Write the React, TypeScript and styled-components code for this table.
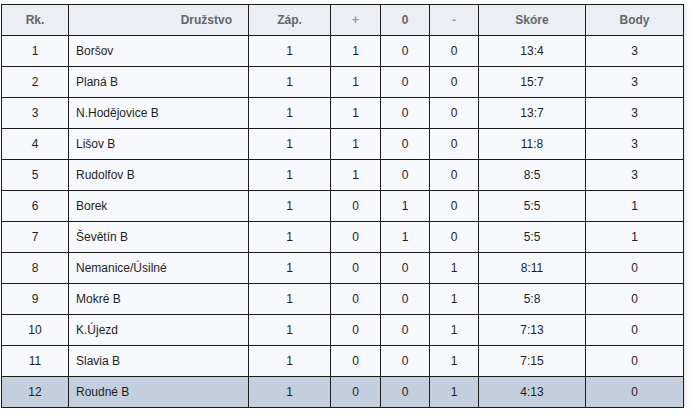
import styled, { createGlobalStyle } from "styled-components";

interface Team {
  rank: number;
  name: string;
  played: number;
  won: number;
  drawn: number;
  lost: number;
  score: string;
  points: number;
}

const teams: Team[] = [
  { rank: 1, name: "Boršov", played: 1, won: 1, drawn: 0, lost: 0, score: "13:4", points: 3 },
  { rank: 2, name: "Planá B", played: 1, won: 1, drawn: 0, lost: 0, score: "15:7", points: 3 },
  { rank: 3, name: "N.Hodějovice B", played: 1, won: 1, drawn: 0, lost: 0, score: "13:7", points: 3 },
  { rank: 4, name: "Lišov B", played: 1, won: 1, drawn: 0, lost: 0, score: "11:8", points: 3 },
  { rank: 5, name: "Rudolfov B", played: 1, won: 1, drawn: 0, lost: 0, score: "8:5", points: 3 },
  { rank: 6, name: "Borek", played: 1, won: 0, drawn: 1, lost: 0, score: "5:5", points: 1 },
  { rank: 7, name: "Ševětín B", played: 1, won: 0, drawn: 1, lost: 0, score: "5:5", points: 1 },
  { rank: 8, name: "Nemanice/Úsilné", played: 1, won: 0, drawn: 0, lost: 1, score: "8:11", points: 0 },
  { rank: 9, name: "Mokré B", played: 1, won: 0, drawn: 0, lost: 1, score: "5:8", points: 0 },
  { rank: 10, name: "K.Újezd", played: 1, won: 0, drawn: 0, lost: 1, score: "7:13", points: 0 },
  { rank: 11, name: "Slavia B", played: 1, won: 0, drawn: 0, lost: 1, score: "7:15", points: 0 },
  { rank: 12, name: "Roudné B", played: 1, won: 0, drawn: 0, lost: 1, score: "4:13", points: 0 },
];

// sloupce: Rk, Družstvo, Záp, +, 0, -, Skóre, Body
const widths = [67, 180, 82, 50, 49, 49, 107, 98];

function App() {
  return (
    <>
      <GlobalStyle />
      <Page>
        <Table>
          <colgroup>
            {widths.map((w, i) => (
              <col key={i} style={{ width: w }} />
            ))}
          </colgroup>
          <thead>
            <tr>
              <Th>Rk.</Th>
              <Th $align="right">Družstvo</Th>
              <Th>Záp.</Th>
              <Th $light>+</Th>
              <Th>0</Th>
              <Th $light>-</Th>
              <Th>Skóre</Th>
              <Th>Body</Th>
            </tr>
          </thead>
          <tbody>
            {teams.map((t) => (
              <Row key={t.rank} $active={t.rank === 12}>
                <Td>{t.rank}</Td>
                <Td $align="left">{t.name}</Td>
                <Td>{t.played}</Td>
                <Td>{t.won}</Td>
                <Td>{t.drawn}</Td>
                <Td>{t.lost}</Td>
                <Td>{t.score}</Td>
                <Td>{t.points}</Td>
              </Row>
            ))}
          </tbody>
        </Table>
      </Page>
    </>
  );
}

const GlobalStyle = createGlobalStyle`
  body {
    margin: 0;
    background: #ffffff;
    font-family: "Liberation Sans", Arial, sans-serif;
  }
`;

const Page = styled.div`
  padding: 4px 0 0 1px;
`;

const Table = styled.table`
  border-collapse: separate;
  border-spacing: 0;
  table-layout: fixed;
  width: 683px;
  border-top: 1px solid #1c1c1c;
  border-left: 1px solid #1c1c1c;
  box-shadow: 2px 2px 4px rgba(150, 160, 180, 0.25);
  font-size: 12px;
`;

const Th = styled.th<{ $align?: string; $light?: boolean }>`
  height: 30px;
  padding: 0 ${(p) => (p.$align === "right" ? "16px" : "4px")} 0 4px;
  text-align: ${(p) => p.$align || "center"};
  background: #eceef5;
  color: ${(p) => (p.$light ? "#9a9a9a" : "#666666")};
  font-weight: bold;
  border-right: 1px solid #1c1c1c;
  border-bottom: 1px solid #1c1c1c;
`;

const Row = styled.tr<{ $active?: boolean }>`
  background: ${(p) => (p.$active ? "#c4cfdd" : "#f8f9fc")};
`;

const Td = styled.td<{ $align?: string }>`
  height: 30px;
  padding: 0 ${(p) => (p.$align === "left" ? "4px 0 7px" : "4px")};
  text-align: ${(p) => p.$align || "center"};
  color: #1e1e1e;
  border-right: 1px solid #1c1c1c;
  border-bottom: 1px solid #1c1c1c;
  white-space: nowrap;
`;

export default App;
